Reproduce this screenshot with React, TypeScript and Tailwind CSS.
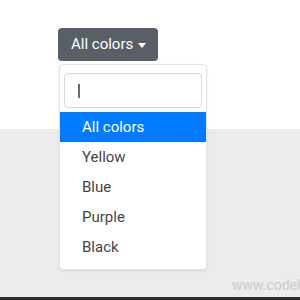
const colors = ["Yellow", "Blue", "Purple", "Black"];

export default function App() {
  return (
    <div
      className="relative w-[300px] h-[300px] overflow-hidden bg-[#ececec]"
      style={{ fontFamily: "Roboto, 'Liberation Sans', sans-serif" }}
    >
      {/* top white band */}
      <div className="h-[129px] bg-white pl-[58px] pt-[28px]">
        <div className="relative inline-block">
          <button className="flex h-[33px] items-center gap-[5px] rounded-[4px] bg-[#585f66] pl-[13px] pr-[12px] text-[15px] text-white">
            All colors
            <span className="mt-[1px] h-0 w-0 border-x-[4px] border-t-[5px] border-x-transparent border-t-white" />
          </button>

          {/* dropdown menu */}
          <div className="absolute left-[1px] top-[36px] z-10 w-[148px] rounded-[4px] border border-[#e3e3e3] bg-white pt-[8px] pb-[7px] shadow-[0_1px_3px_rgba(0,0,0,0.08)]">
            <div className="mx-[4px] flex h-[35px] items-center rounded-[4px] border border-[#d5d7da] pl-[13px]">
              <span className="h-[14px] w-[2px] bg-[#6b6b6b]" />
            </div>
            <div className="mt-[4px] flex h-[30px] items-center bg-[#007bff] pl-[22px] text-[15px] text-white">
              All colors
            </div>
            {colors.map((c) => (
              <div
                key={c}
                className="flex h-[30px] items-center pl-[22px] text-[15px] text-[#444]"
              >
                {c}
              </div>
            ))}
          </div>
        </div>
      </div>

      {/* watermark */}
      <div className="absolute left-[232px] top-[275px] whitespace-nowrap text-[14px] text-[#cbcbcb]">
        www.codehim.com
      </div>

      {/* bottom dark line */}
      <div className="absolute bottom-0 left-0 h-[3px] w-full bg-[#2e2e2e]" />
    </div>
  );
}
